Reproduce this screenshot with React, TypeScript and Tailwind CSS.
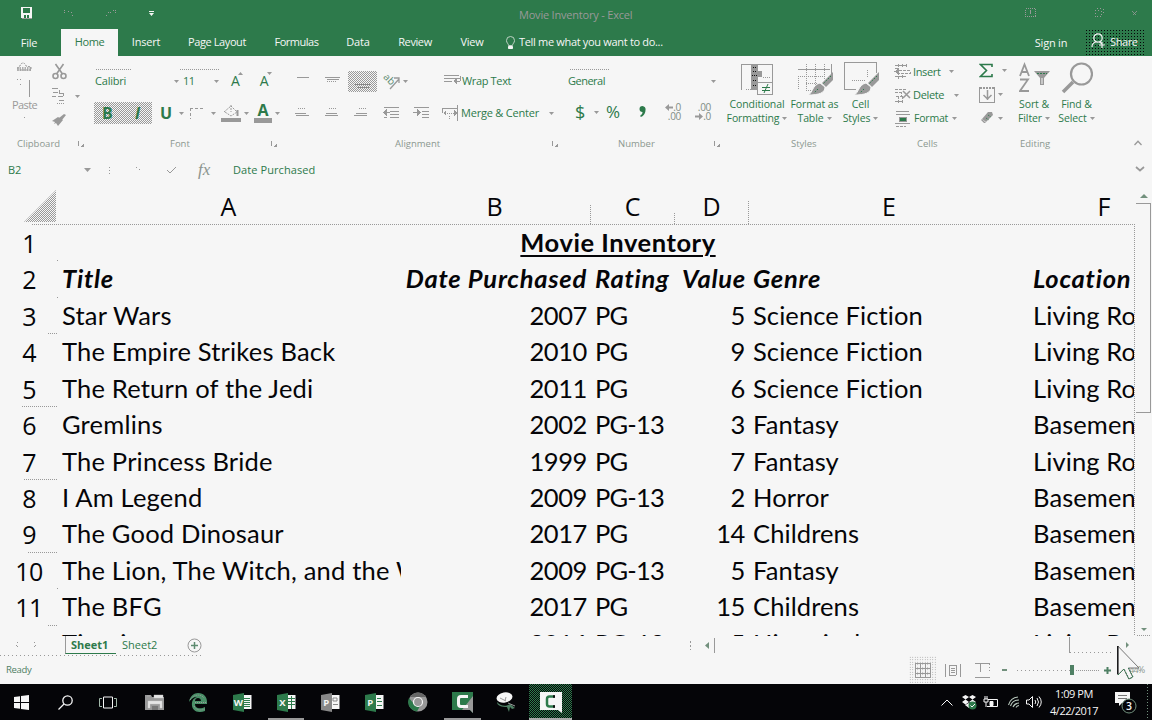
import React from "react";

type Kids = { children?: React.ReactNode };

const G = "#2d7a4b";
const N = "#999999";

/* Small drop-down arrow */
const Tri = ({ c = "" }: { c?: string }) => (
  <svg className={"shrink-0 " + c} width="5" height="3" viewBox="0 0 5 3"><path d="M0 0h5L2.5 3z" fill={N} /></svg>
);

const Icon = ({ w, h, c = "", children }: Kids & { w: number; h: number; c?: string }) => (
  <svg className={"shrink-0 " + c} width={w} height={h} viewBox={`0 0 ${w} ${h}`} fill="none" stroke={N} shapeRendering="crispEdges">{children}</svg>
);

const Launcher = ({ c }: { c: string }) => (
  <Icon w={7} h={7} c={c}><path d="M.5 0v5" /><path d="M6 2v4H2z" fill={N} stroke="none" /></Icon>
);

const dotsX = "bg-[repeating-linear-gradient(90deg,#999_0_1px,transparent_1px_2px)]";
const dotsY = "bg-[repeating-linear-gradient(180deg,#999_0_1px,transparent_1px_2px)]";
const checker = "bg-[repeating-conic-gradient(#999_0_25%,#f6f6f6_0_50%)] bg-[length:2px_2px]";

function TitleBar() {
  return (
    <div className="flex h-[28px] items-center text-[#999]">
      <Icon w={12} h={12} c="ml-[21px] mb-[2px]"><path d="M0 0h11v11H0z" fill="#f6f6f6" stroke="none" /><path d="M2 1h7v5H2zM3 8h5v3H3z" fill={G} stroke="none" /><path d="M5 8h1v3H5z" fill="#f6f6f6" stroke="none" /><path d="M1 11.5h10" /></Icon>
      <Icon w={12} h={8} c="ml-[30px] mb-[3px]"><path d="M1 1h2M1 3h1M5 2h2M8 3h1M9 6h2" strokeDasharray="1 1" /></Icon>
      <Icon w={12} h={8} c="ml-[30px] mb-[3px]"><path d="M8 1h3M10 3h1M3 3h3M1 6h2" strokeDasharray="1 1" /></Icon>
      <svg className="ml-[32px] mb-[1px]" width="5" height="6" viewBox="0 0 5 6"><path d="M0 0h5v1H0zM0 2h5L2.500 5z" fill="#f6f6f6" /></svg>
      <div className="ml-[365px] mt-[3px] w-[120px] text-[11px] tracking-[-0.2px] whitespace-nowrap">Movie Inventory - Excel</div>
      <Icon w={12} h={10} c="ml-[386px] mb-[2px]"><rect x=".5" y=".5" width="10" height="8" strokeDasharray="1 1" /><path d="M5.500 2v4" /></Icon>
      <Icon w={10} h={10} c="ml-[57px] mb-[2px]"><path d="M1 2.500h6v6H1zM3 .5h6v6" strokeDasharray="1 2" /></Icon>
      <Icon w={6} h={6} c="ml-[28px] mb-[2px]"><path d="M.5.5l4 4M4.500.5l-4 4" strokeWidth=".8" /></Icon>
    </div>
  );
}

function Tab({ c, children }: Kids & { c: string }) {
  return <div className={"flex h-[27px] shrink-0 items-center justify-center whitespace-nowrap " + c}>{children}</div>;
}

function Tabs() {
  return (
    <div className="flex h-[28px] items-end text-[11px] tracking-[-0.2px] text-[#f6f6f6]">
      <Tab c="w-[61px] pt-[1px] pr-[3px]">File</Tab>
      <Tab c="w-[57px] bg-[#f6f6f6] text-[#2d7a4b] tracking-[-0.4px]">Home</Tab>
      <Tab c="w-[56px]">Insert</Tab>
      <Tab c="w-[86px] tracking-[-0.4px]">Page Layout</Tab>
      <Tab c="w-[73px] tracking-[-0.5px]">Formulas</Tab>
      <Tab c="w-[50px]">Data</Tab>
      <Tab c="w-[64px] tracking-[-0.4px]">Review</Tab>
      <Tab c="w-[50px]">View</Tab>
      <Tab c="ml-[8px]">
        <svg width="11" height="14" viewBox="0 0 11 14" fill="none" stroke="#bdd2c4"><path d="M3.500 9.500C3.500 7.500 1.500 7 1.500 4.500a4 4 0 0 1 8 0c0 2.500-2 3-2 5z" /><path d="M3.500 10.500h4v2h-4z" fill="#f6f6f6" stroke="#f6f6f6" /></svg>
      </Tab>
      <Tab c="ml-[3px] tracking-[-0.32px]">Tell me what you want to do...</Tab>
      <Tab c="ml-auto w-[34px] pt-[1px]">Sign in</Tab>
      <div className="mr-[8px] ml-[17px] flex h-[27px] w-[59px] shrink-0 items-center bg-[radial-gradient(#050508_35%,transparent_36%)] bg-[length:3px_3px] pl-[6px] text-[#f6f6f6]">
        <svg className="mb-[3px]" width="16" height="16" viewBox="0 0 16 16" fill="none" stroke="#f6f6f6" strokeWidth="1.200"><circle cx="7" cy="5" r="4.200" /><path d="M1 14c0-3 2-4.500 4-5M8.500 9l2 1.500M8 12h6M11 9v6" /></svg>
        <span className="ml-[3px] tracking-[-0.4px]">Share</span>
      </div>
    </div>
  );
}

const Group = ({ c, label, lp, launch, children }: Kids & { c: string; label: string; lp: string; launch?: string }) => (
  <div className={"flex h-full shrink-0 flex-col " + c}>
    <div className="h-[79px]">{children}</div>
    <div className="flex h-[18px] items-center text-[9.500px] whitespace-nowrap text-[#8c9890]">
      <span className={lp}>{label}</span>
      {launch && <Launcher c={launch} />}
    </div>
  </div>
);

const Big = ({ c, icon, a, b, sub = "" }: { c: string; icon: React.ReactNode; a: string; b: string; sub?: string }) => (
  <div className={"flex shrink-0 flex-col items-center pt-[5px] text-[10.500px] leading-[14px] tracking-[-0.1px] whitespace-nowrap " + c}>
    <div className="flex h-[36px] items-start">{icon}</div>
    <span className={sub}>{a}</span>
    <span className={"flex items-center " + sub}>{b}<Tri c="ml-[3px]" /></span>
  </div>
);

const Align = ({ o, c }: { o: number; c: string }) => (
  <Icon w={16} h={13} c={c}><path d={`M${3 + o} 1.500h7`} strokeDasharray="1 1" /><path d={`M${o} 6.500h11M1 8.500h13`} /></Icon>
);

/* Paint brush laid over the table and cell style icons */
const Brush = () => (
  <g shapeRendering="auto">
    <path d="M35 10v8l-7 7-4-4z" fill={N} stroke="none" />
    <path d="M22 21l5 4c0 6-6 8-17 8 5-2 4-10 12-12z" fill={N} stroke="#f6f6f6" />
    <path d="M33 14l-8 8M20 27l-4 4" stroke={G} strokeDasharray="1.500 1.500" />
  </g>
);

function Ribbon() {
  return (
    <div className="flex h-[100px] text-[11px] text-[#2d7a4b]">
      <Group c="w-[87px]" label="Clipboard" lp="ml-[17px]" launch="ml-[18px]">
        <div className="flex h-full">
          <div className="ml-[12px] flex w-[33px] flex-col pt-[6px]">
            <Icon w={33} h={36}><g shapeRendering="auto"><path d="M6 7c0-2 1-3 2-3 1-4 5-4 6 0l5 1v3H6" strokeDasharray="2 1" /><path d="M5 6h14M5 8h15" strokeWidth="1.500" strokeDasharray="1.500 1" /></g><path d="M5 17.500h6M8 22h1" strokeDasharray="1 2" /><path d="M17.500 18v17" /></Icon>
            <span className="text-[11px] leading-[14px] tracking-[-0.6px] text-[#999]">Paste</span>
            <div className="ml-[12px] mt-[5px] h-px w-px bg-[#999]" />
          </div>
          <div className="ml-[7px] flex flex-col pt-[7px]">
            <svg width="15" height="18" viewBox="0 0 15 18" fill="none" stroke={N} strokeWidth="1.600"><path d="M3.500 1l7 10M11.500 1l-7 10" /><circle cx="3.500" cy="13" r="2.500" /><circle cx="11.500" cy="13" r="2.500" /></svg>
            <div className="mt-[6px] flex items-center"><Icon w={14} h={18}><path d="M0 1.500h6M1 5.500h5M0 9.500h4M7.500 3v3h4M6 9.500h5M7 13.500h5M11.500 6v3" /><path d="M5 16.500h8" strokeDasharray="1 1" /></Icon><Tri c="ml-[9px]" /></div>
            <svg className="mt-[9px]" width="15" height="12" viewBox="0 0 15 12" fill={N}><path d="M12 0l2 1-4 5-3-2zM6 3l5 3-5 6-2-3-2 1 1-2-3-1z" /></svg>
          </div>
        </div>
      </Group>

      <Group c="w-[195px]" label="Font" lp="ml-[83px]" launch="ml-[81px]">
        <div className="flex pt-[13px]"><div className={"ml-[9px] h-px w-[35px] " + dotsX} /><div className={"ml-[49px] h-px w-[40px] " + dotsX} /></div>
        <div className="flex h-[22px] items-center">
          <span className="ml-[8px] w-[79px] tracking-[-0.2px]">Calibri</span><Tri />
          <span className="ml-[4px] w-[31px] tracking-[-0.5px]">11</span><Tri />
          <span className="ml-[12px] text-[14px] leading-none">A</span><svg className="mb-[15px] -ml-[2px]" width="5" height="3"><path d="M0 3h5L2.500 0z" fill={N} /></svg>
          <span className="ml-[17px] text-[14px] leading-none">A</span><Tri c="mb-[16px] -ml-[2px]" />
        </div>
        <div className="mt-[10px] flex h-[22px] items-center">
          <div className={"ml-[7px] flex h-[22px] w-[58px] items-center text-[16px] font-bold " + checker}>
            <span className="ml-[8px] w-[33px]">B</span><span className="font-['Open_Sans'] italic">I</span>
          </div>
          <span className="ml-[8px] w-[12px] text-[16px] font-bold">U</span><Tri c="ml-[7px]" />
          <Icon w={13} h={13} c="ml-[6px]"><path d="M0 1.500h13M.5 1v11" strokeDasharray="3 2" /></Icon><Tri c="ml-[8px]" />
          <svg className="ml-[5px]" width="20" height="18" viewBox="0 0 20 18" fill="none" stroke={N}><path d="M10 1v7M3 8l7-6 6 6-6 4-6-4" strokeDasharray="2 1" /><path d="M16.500 6v6" strokeWidth="2" /><path d="M0 14h20v4H0z" fill={N} stroke="none" /></svg><Tri c="ml-[3px]" />
          <div className="ml-[5px] flex w-[18px] flex-col items-center"><span className="text-[16px] leading-[15px] font-bold">A</span><div className="h-[5px] w-[18px] bg-[#999] bg-[radial-gradient(#111_35%,transparent_36%)] bg-[length:2px_2px]" /></div><Tri c="ml-[3px]" />
        </div>
      </Group>

      <Group c="w-[278px]" label="Alignment" lp="ml-[113px]" launch="ml-[112px]">
        <div className="mt-[14px] flex h-[22px] items-center">
          <Icon w={13} h={16} c="ml-[15px]"><path d="M0 4.500h12" /></Icon>
          <Icon w={16} h={16} c="ml-[15px]"><path d="M0 4.500h15M2 6.500h12" /><path d="M2 8.500h10" strokeDasharray="1 1" /></Icon>
          <div className={"ml-[7px] flex h-[21px] w-[29px] items-end justify-center pb-[4px] " + checker}><Icon w={16} h={5}><path d="M0 1.500h16M2 4.500h12" stroke="#888" /></Icon></div>
          <svg className="ml-[6px]" width="18" height="19" viewBox="0 0 18 19" fill="none"><path d="M7 17L16 7M11 6h5v5" stroke={N} strokeWidth="1.300" /><text x="0" y="9" fontSize="10" fill="#5d8b70" transform="rotate(45 4 7)">ab</text></svg><Tri c="ml-[2px]" />
          <Icon w={17} h={16} c="ml-[36px]"><path d="M0 2.500h15M0 5.500h16M0 8.500h8M16.500 3v5M11 8.500h5" /><path d="M9 8l4-3v7z" fill={N} stroke="none" /></Icon>
          <span className="ml-[1px] tracking-[-0.35px] whitespace-nowrap">Wrap Text</span>
        </div>
        <div className="mt-[10px] flex h-[22px] items-center">
          <Align o={0} c="ml-[13px]" /><Align o={2} c="ml-[13px]" /><Align o={3} c="ml-[13px]" />
          <Icon w={17} h={15} c="ml-[14px]"><path d="M1 1.500h15M7 5.500h9M7 8.500h9M1 11.500h3M7 11.500h9M2 6.500h5" /><path d="M0 6.500l4-4v8z" fill={N} stroke="none" /></Icon>
          <Icon w={17} h={15} c="ml-[13px]"><path d="M1 1.500h15M9 5.500h7M9 8.500h7M9 11.500h7M0 6.500h4" /><path d="M8 6.500L4 2.500v8z" fill={N} stroke="none" /></Icon>
          <Icon w={17} h={17} c="ml-[12px]"><path d="M0 3.500h15M15.500 0v16M.5 3v5" /><path d="M3 8.500h11M7.500 11v4" strokeDasharray="1 1" /><path d="M1 8l3-3v6zM15 8l-3-3v6z" fill={N} stroke="none" /></Icon>
          <span className="ml-[2px] w-[88px] tracking-[-0.2px] whitespace-nowrap">Merge &amp; Center</span><Tri />
        </div>
      </Group>

      <Group c="w-[164px]" label="Number" lp="ml-[58px]" launch="ml-[59px]">
        <div className={"ml-[10px] mt-[13px] h-px w-[40px] " + dotsX} />
        <div className="flex h-[22px] items-center"><span className="ml-[8px] w-[143px] tracking-[-0.5px]">General</span><Tri /></div>
        <div className="mt-[9px] flex h-[22px] items-center">
          <span className="ml-[15px] w-[19px] text-[18px]">$</span><Tri />
          <span className="ml-[7px] w-[33px] text-[17px]">%</span>
          <svg width="7" height="12" viewBox="0 0 7 12"><path d="M3.500 0a3.300 3.300 0 0 1 3 4c0 4-3 7-5 7V9c1 0 2-1 2-3A3 3 0 0 1 3.500 0" fill={G} /></svg>
          <div className="ml-[18px] flex w-[17px] flex-col items-end text-[10px] leading-[9px] tracking-[-0.3px] text-[#7f8d84]"><span className="flex items-center"><svg width="8" height="7" viewBox="0 0 8 7"><path d="M0 3.500L4 0v2.500h4v2H4V7z" fill={N} /></svg>.0</span><span>.00</span></div>
          <div className="ml-[13px] flex w-[17px] flex-col items-end text-[10px] leading-[9px] tracking-[-0.3px] text-[#7f8d84]"><span>.00</span><span className="flex items-center"><svg width="8" height="7" viewBox="0 0 8 7"><path d="M8 3.500L4 0v2.500H0v2h4V7z" fill={N} /></svg>.0</span></div>
        </div>
      </Group>

      <Group c="w-[160px]" label="Styles" lp="ml-[67px]">
        <div className="flex">
          <Big c="w-[66px]" a="Conditional" b="Formatting" icon={
            <Icon w={33} h={35}><path d="M.5 29V3.500h31V22" /><path d="M10 4h7v25h-7z" fill={N} stroke="none" /><path d="M12 6h4M12 10h4M11 14h6M12 19h4M12 24h4" stroke="#111" strokeDasharray="1 1" /><path d="M17 10h4v6h-4z" fill={N} stroke="none" /><path d="M5 28.500h10M22 16.500h8" strokeDasharray="1 1" /><path d="M16.500 21.500h15v12h-15z" fill="#f6f6f6" /><path d="M21 26.500h8M21 29.500h8M27 23l-4 9" stroke={G} shapeRendering="auto" /></Icon>} />
          <Big c="w-[49px]" a="Format as" b="Table" icon={
            <Icon w={36} h={36} c="mt-[1px] ml-[2px]"><path d="M0 7.500h32M33.500 2v10" /><path d="M.5 14v14M8.500 2v26M17.500 2v22M26.500 2v15M0 14.500h25M8 21.500h14M8 28.500h6" strokeDasharray="1 1" /><Brush /></Icon>} />
          <Big c="w-[43px]" a="Cell" b="Styles" icon={
            <Icon w={36} h={36} c="mt-[1px] ml-[2px]"><path d="M12 27.500H.5V.5h32v10" /><path d="M8 18.500h14M23.500 8v8" strokeDasharray="1 1" /><Brush /></Icon>} />
        </div>
      </Group>

      <Group c="w-[88px]" label="Cells" lp="ml-[33px]">
        <div className="flex flex-col pt-[4px]">
          <div className="flex h-[23.500px] items-center"><Icon w={17} h={17} c="ml-[10px]"><path d="M1 2.500h12M1 5.500h4M5 7.500h11v3H5M1 13.500h12M4.500 1v15M8.500 1v4M8.500 12v4M12.500 1v4" strokeDasharray="3 1" /><path d="M0 8.500l5-3v6z" fill={N} stroke="none" /></Icon><span className="ml-[2px] w-[36px] text-[11px] tracking-[-0.35px]">Insert</span><Tri /></div>
          <div className="flex h-[23.500px] items-center"><Icon w={17} h={17} c="ml-[10px]"><path d="M1 2.500h12M1 5.500h6v4H1M1 14.500h8M4.500 9v7M8.500 9v7" strokeDasharray="3 1" /><path d="M9 4l7 7M16 4l-7 7" strokeWidth="1.500" shapeRendering="auto" /></Icon><span className="ml-[2px] w-[41px] text-[11px] tracking-[-0.35px]">Delete</span><Tri /></div>
          <div className="flex h-[23.500px] items-center"><Icon w={17} h={17} c="ml-[10px]"><path d="M2 1.500h13M2 4.500h14M1 13.500h15" /><path d="M2 16.500h10" strokeDasharray="3 1" /><path d="M5 7h7v4H5z" fill={G} /></Icon><span className="ml-[3px] w-[38px] text-[10.500px] tracking-[-0.2px]">Format</span><Tri /></div>
        </div>
      </Group>

      <Group c="w-[180px]" label="Editing" lp="ml-[48px]">
        <div className="flex">
          <div className="flex w-[40px] flex-col pl-[7px] pt-[3px]">
            <div className="flex h-[23px] items-center"><svg width="14" height="16" viewBox="0 0 14 16" fill="none"><path d="M13 4V1.500H1.500l6 6-6 6H13V11" stroke={G} strokeWidth="1.600" /></svg><Tri c="ml-[9px]" /></div>
            <div className="flex h-[24px] items-center"><Icon w={17} h={17}><path d="M.5 1v15h15V1" /><path d="M1 1.500h14" strokeWidth="2" strokeDasharray="2 1" /><path d="M8.500 4v10M4.500 9l4 4 4-4" strokeWidth="1.500" shapeRendering="auto" /></Icon><Tri c="ml-[2px]" /></div>
            <div className="flex h-[24px] items-center"><svg width="17" height="14" viewBox="0 0 17 14"><path d="M9 1h4l1 3-7 7-4-3z" fill={N} /><path d="M3 8l4 4H5L2 9z" fill={N} /><path d="M7 7l3 2M9 4l3 2" stroke="#2d7a4b" strokeDasharray="1 1" /></svg><Tri c="ml-[2px]" /></div>
          </div>
          <Big c="w-[44px]" a="Sort &" b="Filter" icon={
            <svg width="31" height="34" viewBox="0 0 31 34" fill="none" stroke={N} strokeWidth="1.800"><path d="M1 15L5.500 3.500 10 15M2.500 11h6M1 18.500h8L1 30h9" /><path d="M15 10h16l-6 7v7h-4v-7z" fill={N} stroke="none" /><path d="M18 12.500h10" stroke={G} strokeWidth="1" strokeDasharray="2 1" /><path d="M23 17v6" stroke="#f6f6f6" strokeWidth="1" /></svg>} />
          <Big c="w-[41px]" a="Find &" b="Select" icon={
            <svg width="32" height="34" viewBox="0 0 32 34" fill="none" stroke={N} strokeWidth="2.200"><circle cx="20.500" cy="13" r="10.500" /><path d="M12 21L2 31" strokeWidth="3.500" /></svg>} />
          <svg className="mt-[84px] mr-[10px] ml-auto" width="8" height="6" viewBox="0 0 8 6" fill="none" stroke={N} strokeWidth="1.300"><path d="M.5 5L4 1.200 7.500 5" /></svg>
        </div>
      </Group>
    </div>
  );
}

function FormulaBar() {
  return (
    <div className="flex h-[28px] items-center text-[11px] text-[#2d7a4b]">
      <span className="ml-[8px] w-[75px]">B2</span>
      <svg className="ml-[1px]" width="7" height="4" viewBox="0 0 7 4"><path d="M0 0h7L3.500 4z" fill={N} /></svg>
      <Icon w={3} h={9} c="ml-[17px]"><path d="M1.500 1v8" strokeDasharray="1 2" /></Icon>
      <Icon w={5} h={5} c="ml-[25px] mb-[3px]"><path d="M0 1h1M3 3h1" /></Icon>
      <svg className="ml-[25px]" width="11" height="8" viewBox="0 0 11 8" fill="none" stroke={N}><path d="M1 4l3 3 6-6" /></svg>
      <span className="ml-[21px] w-[35px] font-['Liberation_Serif',serif] text-[17px] text-[#8b948e] italic">fx</span>
      <span className="tracking-[0.08px]">Date Purchased</span>
      <svg className="mr-[7px] mb-[2px] ml-auto" width="10" height="6" viewBox="0 0 10 6" fill="none" stroke={N} strokeWidth="1.700"><path d="M1 1l4 3.500L9 1" /></svg>
    </div>
  );
}

const rows: string[][] = [
  [],
  ["Title", "Date Purchased", "Rating", "Value", "Genre", "Location"],
  ["Star Wars", "2007", "PG", "5", "Science Fiction", "Living Room"],
  ["The Empire Strikes Back", "2010", "PG", "9", "Science Fiction", "Living Room"],
  ["The Return of the Jedi", "2011", "PG", "6", "Science Fiction", "Living Room"],
  ["Gremlins", "2002", "PG-13", "3", "Fantasy", "Basement"],
  ["The Princess Bride", "1999", "PG", "7", "Fantasy", "Living Room"],
  ["I Am Legend", "2009", "PG-13", "2", "Horror", "Basement"],
  ["The Good Dinosaur", "2017", "PG", "14", "Childrens", "Basement"],
  ["The Lion, The Witch, and the Wardrobe", "2009", "PG-13", "5", "Fantasy", "Basement"],
  ["The BFG", "2017", "PG", "15", "Childrens", "Basement"],
  ["Titanic", "2016", "PG-13", "5", "Historical", "Living Room"],
];
const marks = ["w-px", "w-px", "w-[10px]", "w-0", "w-[36px]", "w-0", "w-[34px]", "w-0", "w-[30px]", "w-px", "w-[10px]", "w-0"];

function Grid() {
  const col = "shrink-0 overflow-hidden px-[4px] whitespace-nowrap";
  return (
    <div className="flex h-[452px]">
      <div className="w-[1134px] overflow-hidden font-['Lato','Liberation_Sans',sans-serif] text-[25.500px] text-[#050508] [font-variant-ligatures:none]">
        <div className="flex h-[40px] items-end">
          <div className="flex h-[34px] w-[58px] shrink-0 items-start justify-end pr-[2px]"><div className={"h-[32px] w-[32px] [clip-path:polygon(100%_0,100%_100%,0_100%)] " + checker} /></div>
          <div className="flex h-full grow items-center text-center font-['Open_Sans'] text-[25px] leading-[34px]">
            <div className="w-[341px] shrink-0 pt-[4px]">A</div>
            <div className="flex h-full w-[192px] shrink-0 items-end"><span className="grow pb-[1px]">B</span><div className={"h-[19px] w-px " + dotsY} /></div>
            <div className="flex h-full w-[84px] shrink-0 items-end"><span className="grow pb-[1px]">C</span><div className={"h-[11px] w-px " + dotsY} /></div>
            <div className="flex h-full w-[74px] shrink-0 items-end"><span className="grow pb-[1px]">D</span><div className={"h-[23px] w-px " + dotsY} /></div>
            <div className="w-[280px] shrink-0 pt-[4px]">E</div>
            <div className="w-[150px] shrink-0 pt-[4px]">F</div>
          </div>
        </div>
        <div className="flex h-px"><div className="w-[32px]" /><div className={"h-px grow " + dotsX} /></div>
        <div className="flex h-[411px] flex-col overflow-hidden">
          {rows.map((r, i) => {
            const num = i === 1 ? "" : "tracking-[-0.4px]";
            const text = i === 1 ? "" : "tracking-[0.1px]";
            return (
              <div key={i} className={"flex h-[36.430px] shrink-0 items-start leading-[35px] " + (i === 1 ? "font-bold tracking-[0.75px] italic" : "")}>
                <div className="flex h-full w-[58px] shrink-0 flex-col items-end font-['Open_Sans'] text-[25px] font-normal tracking-[-0.6px] not-italic">
                  <span className="h-[35.400px] w-full text-center leading-[36px]">{i + 1}</span>
                  <div className={"h-px " + dotsX + " " + marks[i]} />
                </div>
                {i === 0 ? (
                  <div className="w-[1120px] shrink-0 text-center"><span className="font-bold tracking-[0.550px] underline decoration-[2px] underline-offset-[3px]">Movie Inventory</span></div>
                ) : (
                  <>
                    <div className={col + " w-[343px] " + (i === 1 ? "" : "tracking-[0.2px]")}>{r[0]}</div>
                    <div className={col + " w-[190px] text-right " + num}>{r[1]}</div>
                    <div className={col + " w-[84px] " + (i === 1 ? "" : "tracking-[-0.8px]")}>{r[2]}</div>
                    <div className={col + " w-[74px] text-right " + num + (i === 1 ? " pr-[3px] pl-0" : "")}>{r[3]}</div>
                    <div className={col + " w-[280px] " + text}>{r[4]}</div>
                    <div className={col + " w-[200px] " + text}>{r[5]}</div>
                  </>
                )}
              </div>
            );
          })}
        </div>
      </div>
      <div className="flex w-[18px] shrink-0">
        <div className={"mt-[40px] h-[412px] w-px " + dotsY} />
        <div className="flex w-[17px] flex-col items-center">
          <svg className="mt-[10px]" width="8" height="4" viewBox="0 0 8 4"><path d="M0 4h8L4 0z" fill="#72907d" /></svg>
          <div className="mt-[5px] h-[210px] w-[15px] border-y border-r border-[#999]" />
          <svg className="mt-[215px]" width="6" height="3" viewBox="0 0 6 3"><path d="M0 0h6L3 3z" fill="#72907d" /></svg>
          <div className={"mt-[4px] h-px w-[14px] " + dotsX} />
        </div>
      </div>
    </div>
  );
}

function SheetTabs() {
  return (
    <div className="h-[20px]">
      <div className="flex h-[18px] items-center text-[11px] text-[#2d7a4b]">
        <Icon w={4} h={6} c="ml-[15px]"><path d="M2.500 0L.5 2.500l2 2.500" strokeDasharray="1 1" /></Icon>
        <Icon w={4} h={6} c="ml-[15px]"><path d="M.5 0l2 2.500-2 2.500" strokeDasharray="1 1" /></Icon>
        <div className="ml-[27px] flex h-[18px] w-[51px] items-center border-b border-l border-b-[#2d7a4b] border-l-[#999] pt-px pl-[5px] font-bold">Sheet1</div>
        <span className="ml-[6px] w-[65px]">Sheet2</span>
        <svg width="15" height="15" viewBox="0 0 15 15" fill="none" stroke={N}><circle cx="7.500" cy="7.500" r="6.500" /><path d="M4 7.500h7M7.500 4v7" stroke="#5d8b70" strokeWidth="1.500" /></svg>
        <Icon w={3} h={10} c="ml-[487px]"><path d="M1.500 1v9" strokeDasharray="2 2" /></Icon>
        <svg className="ml-[13px]" width="4" height="7" viewBox="0 0 4 7"><path d="M4 0v7L0 3.500z" fill="#72907d" /></svg>
        <div className="ml-[5px] h-[15px] w-px bg-[#999]" />
        <div className="ml-[354px] flex h-[16px] w-[51px] flex-col justify-end border-l border-[#999]"><div className="h-px w-[44px] bg-[repeating-linear-gradient(90deg,#999_0_1px,transparent_1px_4px)]" /></div>
        <svg className="ml-[6px]" width="4" height="6" viewBox="0 0 4 6"><path d="M0 0v6l3-3z" fill="#72907d" /></svg>
      </div>
      <div className="mt-px h-px w-[203px] bg-[repeating-linear-gradient(90deg,#999_0_1px,transparent_1px_4px)]" />
    </div>
  );
}

function Status() {
  return (
    <div className="flex h-[28px] items-center text-[9.500px] text-[#4f8064]">
      <span className="ml-[6px] w-[903px] tracking-[-0.3px]">Ready</span>
      <div className="flex h-[28px] w-[28px] items-center justify-center bg-[radial-gradient(#999_40%,transparent_41%)] bg-[length:2.500px_2.500px]">
        <Icon w={16} h={15}><path d="M.5.5h15v14H.5zM5.500 0v15M10.500 0v15M0 5.500h16M0 10.500h16" /></Icon>
      </div>
      <Icon w={16} h={14} c="ml-[8px]"><path d="M.5 1v13M15.500 1v13M4.500 2v10h6M5 2.500h6v9M6 5.500h4M6 7.500h4M6 9.500h4" /></Icon>
      <Icon w={16} h={15} c="ml-[14px]"><path d="M0 .5h15M5.500 0v9M0 14.500h15" /><path d="M14.500 1v9" strokeDasharray="1 2" /></Icon>
      <div className="ml-[11px] h-[2px] w-[5px] bg-[#72907d]" />
      <div className="ml-[10px] h-px w-[53px] bg-[repeating-linear-gradient(90deg,#999_0_1px,transparent_1px_4px)]" />
      <div className="h-[10px] w-[4px] bg-[#4f8064]" />
      <div className={"ml-[2px] h-px w-[24px] " + dotsX} />
      <svg className="ml-[4px]" width="7" height="7" viewBox="0 0 7 7" stroke="#4f8064" strokeWidth="2"><path d="M0 3.500h7M3.500 0v7" /></svg>
      <span className="ml-[14px] w-[22px] text-[9px] tracking-[-0.9px] text-[#8c9890]">244%</span>
    </div>
  );
}

const Cell = ({ c = "w-[44px]", u = "", children }: Kids & { c?: string; u?: string }) => (
  <div className={"flex h-[36px] shrink-0 flex-col items-center " + c}>
    <div className="flex h-[34px] items-center pt-[2px]">{children}</div>
    <div className={"h-[2px] " + u} />
  </div>
);

const Office = ({ l, dark = G, sheet }: { l: string; dark?: string; sheet: string }) => (
  <svg width="19" height="19" viewBox="0 0 19 19"><path d="M10 2h8.500v14H10z" fill="#f6f6f6" /><path d={sheet} stroke={dark} fill="none" /><path d="M0 2L11 0v19L0 17z" fill={dark} /><text x="5.300" y="13" fontSize="9.500" fontWeight="700" textAnchor="middle" fill="#f6f6f6">{l}</text></svg>
);

function Taskbar() {
  return (
    <div className="flex h-[36px] bg-[#050508] text-[#f6f6f6]">
      <Cell c="w-[43px]"><svg width="15" height="15" viewBox="0 0 15 15" fill="#f6f6f6"><path d="M0 2l6-.8V7H0zM7 1l8-1v7H7zM0 8h6v5.800L0 13zM7 8h8v7l-8-1z" /></svg></Cell>
      <Cell><svg width="15" height="15" viewBox="0 0 15 15" fill="none" stroke="#f6f6f6" strokeWidth="1.300"><circle cx="9.500" cy="5.500" r="4.700" /><path d="M6 9l-5.500 5.500" /></svg></Cell>
      <Cell c="mr-[4px] w-[41px]"><svg width="18" height="13" viewBox="0 0 18 13" fill="none" stroke="#f6f6f6"><path d="M4.500 1h9v11h-9z" /><path d="M3 2.500H.5v8H3M15 2.500h2.500v8H15" stroke="#a3b9aa" /></svg></Cell>
      <Cell><svg width="19" height="17" viewBox="0 0 19 17"><path d="M0 1h6l1 2h12v13H0z" fill={N} /><path d="M2 2h3M9 1h9v3H9zM3 7h14v7h-2v-4H5v4H3z" fill="#e5e5e5" stroke="#ccc" strokeWidth=".4" /><path d="M7 12h6v4H7z" fill="#777" /></svg></Cell>
      <Cell><svg width="18" height="19" viewBox="0 0 18 19"><path d="M0 9C1 3 5 0 9 0c6 0 9 4 9 9v2H6c0 5 6 5 10 3v4c-8 3-14-1-13-8 0-3 2-5 5-6-4 0-6 2-8 5zm6-1h6c0-4-6-4-6 0z" fill="#4a9068" /><path d="M1 7C4 2 11 0 15 5M6 9.500h12M5 13c2 4 6 5 11 3" fill="none" stroke={N} strokeDasharray="1 1" /></svg></Cell>
      <Cell><Office l="W" sheet="M11 5.500h6M11 7.500h6M11 9.500h6M11 11.500h6M11 13.500h6" /></Cell>
      <Cell u="w-[36px] bg-[#999]"><Office l="X" sheet="M14.500 3v13M11 5.500h7M11 8.500h7M11 11.500h7" /></Cell>
      <Cell><Office l="P" dark="#888888" sheet="M12 5h4v3h-4zM12 11.500h5" /></Cell>
      <Cell><Office l="P" sheet="M12 5.500h4M12 8.500h5M12 12.500h5" /></Cell>
      <Cell><svg width="20" height="20" viewBox="0 0 20 20"><circle cx="10" cy="10" r="9.500" fill={N} /><path d="M1 6a9.500 9.500 0 0 0 8 13.500L12 14 6 12z" fill={G} /><path d="M2 5a9.500 9.500 0 0 1 16 0z" fill="#666" /><circle cx="10" cy="10" r="4.500" fill="#999" stroke="#f6f6f6" strokeWidth="1.200" /></svg></Cell>
      <Cell u="w-[37px] bg-[#999]"><svg width="21" height="21" viewBox="0 0 21 21"><path d="M0 0h21v21l-3-3H0z" fill={G} /><path d="M21 4v17l-3-3h-8z" fill={N} /><path d="M16 4.500H9Q6.500 4.500 6.500 7v5Q6.500 14.500 9 14.500h7" fill="none" stroke="#f6f6f6" strokeWidth="3" /></svg></Cell>
      <Cell><svg width="22" height="21" viewBox="0 0 22 21"><path d="M2 10c3 4 9 5 13 2l5 4-3 1-2-2-1 5-2-5c-5 0-10-1-10-5z" fill="#4f8064" /><ellipse cx="9.500" cy="5.500" rx="8" ry="5" fill="#f6f6f6" transform="rotate(-10 9.500 5.500)" /><path d="M5 6l6 3M11 5l-1 4M13 11l7 3" stroke="#999" /></svg></Cell>
      <Cell c="ml-px w-[43px] bg-[repeating-conic-gradient(#2d7a4b_0_25%,#050508_0_50%)] bg-[length:2px_2px]" u="w-[43px] bg-[#aaa]"><svg width="22" height="21" viewBox="0 0 22 21"><path d="M0 0h22v21l-4-3H0z" fill="#f6f6f6" /><path d="M15 4.500H9.500Q7 4.500 7 7v5Q7 14.500 9.500 14.500H15" fill="none" stroke={G} strokeWidth="2.500" /><path d="M13 4.500h2M13 14.500h2" stroke="#111" strokeWidth="2.500" /></svg></Cell>
      <div className="ml-auto flex items-center">
        <svg width="12" height="7" viewBox="0 0 12 7" fill="none" stroke="#f6f6f6"><path d="M.5 6.500L6 1l5.500 5.500" /></svg>
        <svg className="ml-[9px]" width="15" height="15" viewBox="0 0 15 15" fill="#f6f6f6"><path d="M3.500 0L7 2 3.500 4.500 0 2zM10.500 0L14 2l-3.500 2.500L7 2zM3.500 4.500L7 7 3.500 9.500 0 7zM10.500 4.500L14 7l-3.500 2.500L7 7zM3 10l4-2 3 2-3 3z" /><circle cx="10.500" cy="10.500" r="4" fill={G} /><path d="M8.500 10.500l1.500 1.500 3-3" fill="none" stroke="#f6f6f6" /></svg>
        <svg className="ml-[6px]" width="16" height="12" viewBox="0 0 16 12" fill="none" stroke="#f6f6f6"><path d="M5 3.500h9.500v7H4M2 0v3M4 0v3M1 3h4v3H1zM3 6v5" /><path d="M7 5.500h3v4H7z" fill="#f6f6f6" /></svg>
        <svg className="ml-[9px]" width="12" height="12" viewBox="0 0 12 12" fill="none" stroke="#b9c9be"><path d="M.5 9A11 11 0 0 1 10 1M2.500 10A9 9 0 0 1 11 4M5 11a7 7 0 0 1 6-4M8 11.500a4 4 0 0 1 3-2" strokeWidth="1.100" /></svg>
        <svg className="ml-[6px]" width="16" height="14" viewBox="0 0 16 14" fill="none" stroke="#f6f6f6"><path d="M.5 5v4H3l3.500 3.500v-11L3 5zM9 5q1.500 2 0 4M11 3q3 4 0 8M13 1.500q4.500 5.500 0 11" /></svg>
        <div className="ml-[6px] flex w-[52px] flex-col items-center text-[11px] leading-[16.500px] tracking-[-0.45px] whitespace-nowrap"><span className="pt-px">1:09 PM</span><span>4/22/2017</span></div>
        <svg className="mt-[3px] ml-[15px]" width="22" height="23" viewBox="0 0 22 23"><path d="M0 0h15v11H7l-3 3v-3H0z" fill="#f6f6f6" /><path d="M3 3.500h9M3 6.500h9" stroke="#777" /><circle cx="14" cy="14" r="7" fill="#050508" stroke="#72907d" /><text x="14" y="18" fontSize="10.500" textAnchor="middle" fill="#f6f6f6" fontWeight="600">3</text></svg>
        <div className="mr-[4px] ml-[10px] h-[36px] w-px bg-[repeating-linear-gradient(180deg,#72907d_0_1px,transparent_1px_3px)]" />
      </div>
    </div>
  );
}

export default function App() {
  return (
    <div className="relative flex h-[720px] w-[1152px] flex-col overflow-hidden bg-[#f6f6f6] font-['Open_Sans','Noto_Sans',sans-serif]">
      <div className="bg-[#2d7a4b]"><TitleBar /><Tabs /></div>
      <Ribbon />
      <FormulaBar />
      <Grid />
      <SheetTabs />
      <Status />
      <Taskbar />
      <svg className="absolute top-[645px] left-[1117px]" width="24" height="36" viewBox="0 0 24 36"><path d="M.8 1v29l6-6 5 10 4-2-4.500-9H22z" fill="#f6f6f6" stroke="#777" /><path d="M.8 1v28" stroke="#050508" strokeWidth="1.300" /><path d="M1 30l6-6 5 10 4-2-4.500-9" fill="none" stroke={G} strokeDasharray="2 1" /></svg>
    </div>
  );
}
